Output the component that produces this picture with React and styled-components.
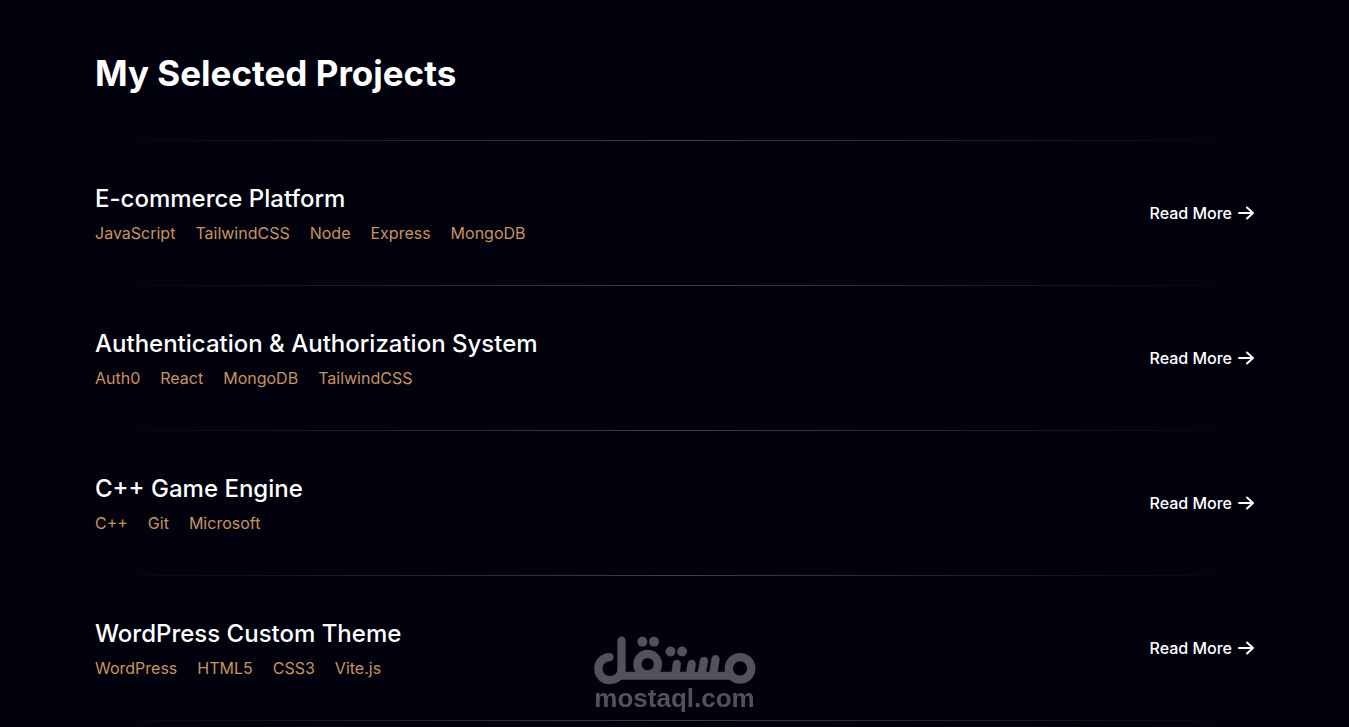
import React from "react";
import styled, { createGlobalStyle } from "styled-components";

const projects = [
  {
    title: "E-commerce Platform",
    tags: ["JavaScript", "TailwindCSS", "Node", "Express", "MongoDB"],
  },
  {
    title: "Authentication & Authorization System",
    tags: ["Auth0", "React", "MongoDB", "TailwindCSS"],
  },
  {
    title: "C++ Game Engine",
    tags: ["C++", "Git", "Microsoft"],
  },
  {
    title: "WordPress Custom Theme",
    tags: ["WordPress", "HTML5", "CSS3", "Vite.js"],
  },
];

function Arrow() {
  return (
    <ArrowIcon viewBox="0 0 16 16" aria-hidden="true">
      <path d="M1 8H15M9 2.5L15 8L9 13.5" />
    </ArrowIcon>
  );
}

function Project({ title, tags }) {
  return (
    <Row>
      <div>
        <ProjectTitle>{title}</ProjectTitle>
        <Tags>
          {tags.map((tag) => (
            <li key={tag}>{tag}</li>
          ))}
        </Tags>
      </div>
      <ReadMore type="button">
        Read More
        <Arrow />
      </ReadMore>
    </Row>
  );
}

function Watermark() {
  return (
    <Mark>
      <MarkLogo viewBox="38 34 489 148" role="img" aria-label="مستقل">
        <g fill="none" stroke="currentColor" strokeWidth="25" strokeLinecap="round">
          <path d="M85 98C64 98 51 114 51 133C51 152 65 167 85 167C107 167 121 153 121 132V48" />
          <path d="M108 154H460" strokeWidth="24" strokeLinecap="butt" />
          <circle cx="200" cy="119" r="31" />
          <circle cx="479" cy="132" r="34" />
          <path d="M288 118L284 148M333 118L328 148M370 109L363 148M405 104L398 148" />
        </g>
        <g fill="currentColor">
          <circle cx="184" cy="51" r="15" />
          <circle cx="219" cy="51" r="15" />
          <circle cx="269" cy="81" r="15" />
          <circle cx="304" cy="81" r="15" />
        </g>
      </MarkLogo>
      <span>mostaql.com</span>
    </Mark>
  );
}

function App() {
  return (
    <Section>
      <GlobalStyle />
      <Heading>My Selected Projects</Heading>
      <Divider />
      {projects.map((project) => (
        <React.Fragment key={project.title}>
          <Project {...project} />
          <Divider />
        </React.Fragment>
      ))}
      <Watermark />
    </Section>
  );
}

export default App;

const GlobalStyle = createGlobalStyle`
  * {
    box-sizing: border-box;
  }
  body {
    margin: 0;
    background: #01020e;
    color: #fff;
    font-family: Inter, "Liberation Sans", sans-serif;
  }
`;

const Section = styled.section`
  padding: 48px 95px 6px;
`;

const Heading = styled.h2`
  margin: 0 0 42px;
  font-size: 35px;
  line-height: 50px;
  font-weight: 700;
`;

const Divider = styled.hr`
  height: 1px;
  margin: 0;
  border: 0;
  background: linear-gradient(to right, transparent, #42403f, transparent);
`;

const Row = styled.article`
  display: flex;
  align-items: center;
  justify-content: space-between;
  padding: 40px 0;
`;

const ProjectTitle = styled.h3`
  margin: 0 0 4px;
  font-size: 24px;
  line-height: 36px;
  font-weight: 500;
`;

const Tags = styled.ul`
  display: flex;
  flex-wrap: wrap;
  gap: 0 20px;
  margin: 0;
  padding: 0;
  list-style: none;
  color: #c9935a;
  font-size: 16px;
  line-height: 24px;
`;

const ReadMore = styled.button`
  display: flex;
  align-items: center;
  gap: 6px;
  padding: 0;
  border: 0;
  background: none;
  color: #fff;
  font-family: inherit;
  font-size: 16px;
  line-height: 24px;
  font-weight: 500;
  cursor: pointer;
`;

const ArrowIcon = styled.svg`
  width: 16px;
  height: 16px;
  fill: none;
  stroke: currentColor;
  stroke-width: 2;
  stroke-linecap: round;
  stroke-linejoin: round;
`;

const Mark = styled.div`
  position: fixed;
  bottom: 16px;
  left: 50%;
  transform: translateX(-50%);
  display: flex;
  flex-direction: column;
  align-items: center;
  color: #53525c;
  font-family: "Liberation Sans", Arial, sans-serif;
  font-size: 26px;
  line-height: 26px;
  font-weight: 700;
  pointer-events: none;
`;

const MarkLogo = styled.svg`
  width: 164px;
  height: 49px;
`;
